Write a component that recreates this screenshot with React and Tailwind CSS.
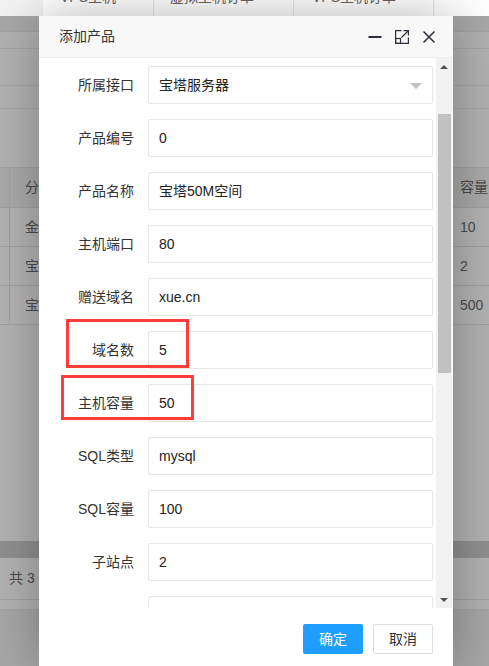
import React from "react";

const rows = [
  { label: "所属接口", value: "宝塔服务器", select: true },
  { label: "产品编号", value: "0" },
  { label: "产品名称", value: "宝塔50M空间" },
  { label: "主机端口", value: "80" },
  { label: "赠送域名", value: "xue.cn" },
  { label: "域名数", value: "5" },
  { label: "主机容量", value: "50" },
  { label: "SQL类型", value: "mysql" },
  { label: "SQL容量", value: "100" },
  { label: "子站点", value: "2" },
  { label: "", value: "" },
];

const tableRows = [
  { a: "金", b: "10" },
  { a: "宝", b: "2" },
  { a: "宝", b: "500" },
];

function TableRow({ a, b, header }) {
  return (
    <div
      className={`grid grid-cols-[10px_434px_1fr] h-[39px] border-t border-[#a0a0a0] ${
        header ? "bg-[#a9a9a9] h-[40px]" : "bg-[#b2b2b2]"
      }`}
    >
      <div className="border-r border-[#a0a0a0]" />
      <div className="flex items-center pl-[15px] text-[14px] text-[#4a4a4a]">{a}</div>
      <div className="flex items-center pl-[15px] text-[14px] text-[#4a4a4a] border-l border-[#a0a0a0]">
        {b}
      </div>
    </div>
  );
}

export default function App() {
  return (
    <div className="relative h-[666px] w-[489px] overflow-hidden bg-[#a6a6a6] font-['Liberation_Sans','Noto_Sans_CJK_SC',sans-serif]">
      {/* top tabs strip */}
      <div className="flex h-4 overflow-hidden bg-white">
        <div className="w-[43px] bg-[#f2f2f2]" />
        <div className="relative w-[111px] overflow-hidden border-r border-[#e6e6e6]">
          <span className="absolute left-[17px] top-[-13px] text-[14px] text-[#666]">VPS主机</span>
        </div>
        <div className="relative w-[140px] overflow-hidden border-r border-[#e6e6e6]">
          <span className="absolute left-[16px] top-[-13px] text-[14px] text-[#666]">虚拟主机订单</span>
        </div>
        <div className="relative w-[140px] overflow-hidden border-r border-[#e6e6e6]">
          <span className="absolute left-[18px] top-[-13px] text-[14px] text-[#666]">VPS主机订单</span>
        </div>
        <div className="flex-1" />
      </div>

      {/* dimmed page behind */}
      <div className="flex flex-col bg-[#b1b1b1]">
        <div className="h-[15px] bg-[#a7a7a7]" />
        <div className="h-[17px] border-t border-[#a2a2a2]" />
        <div className="h-[37px] border-t border-[#a6a6a6]" />
        <div className="h-[23px] border-t border-[#a6a6a6]" />
        <div className="h-[59px] border-t border-[#a6a6a6]" />
        <TableRow a="分" b="容量" header />
        <TableRow {...tableRows[0]} />
        <TableRow {...tableRows[1]} />
        <TableRow {...tableRows[2]} />
        <div className="h-[217px] border-t border-[#a0a0a0]" />
        <div className="h-[17px] bg-[#8f8f8f]" />
        <div className="flex h-[41px] items-center pl-[9px] text-[14px] text-[#4a4a4a]">共 3 条</div>
        <div className="h-[10px] border-t border-[#a0a0a0]" />
        <div className="h-[60px] border-t border-[#a0a0a0] bg-[#a6a6a6]" />
      </div>

      {/* modal */}
      <div className="absolute left-[39px] top-4 flex h-[650px] w-[414px] flex-col rounded-t-[2px] bg-white shadow-[1px_1px_50px_rgba(0,0,0,0.3)]">
        <div className="flex h-[42px] items-center justify-between border-b border-[#eeeeee] bg-[#f8f8f8] pl-5 pr-[17px]">
          <span className="text-[14px] text-[#333]">添加产品</span>
          <div className="flex items-center gap-[13px]">
            <svg width="14" height="14" viewBox="0 0 14 14">
              <rect x="0.5" y="6" width="13" height="2" fill="#2e2d3c" />
            </svg>
            <svg width="14" height="14" viewBox="0 0 14 14" fill="none" stroke="#2e2d3c" strokeWidth="1.2">
              <path d="M6.5 0.6H0.6V13.4H13.4V7.5" />
              <rect x="0.6" y="8.5" width="4.9" height="4.9" />
              <path d="M6.5 7.5L13 1" />
              <path d="M8.5 0.6H13.4V5.5" />
            </svg>
            <svg width="14" height="14" viewBox="0 0 14 14" fill="none" stroke="#2e2d3c" strokeWidth="1.5">
              <path d="M1.5 1.5L12.5 12.5M12.5 1.5L1.5 12.5" />
            </svg>
          </div>
        </div>

        <div className="flex h-[550px] pr-px">
          <div className="flex-1 overflow-hidden pt-2">
            {rows.map((r, i) => (
              <div key={i} className="mb-[15px] flex h-[38px]">
                <div className="flex w-[109px] shrink-0 items-center justify-end pr-[14px] text-[14px] text-[#333]">
                  {r.label}
                </div>
                <div className="relative flex h-[38px] w-[285px] shrink-0 items-center rounded-[2px] border border-[#e6e6e6] pl-[10px] text-[14px] text-[#222]">
                  {r.value}
                  {r.select && (
                    <span className="absolute right-[10px] top-[16px] h-0 w-0 border-x-[6px] border-t-[6px] border-x-transparent border-t-[#c2c2c2]" />
                  )}
                </div>
              </div>
            ))}
          </div>
          <div className="flex w-4 flex-col items-center bg-[#f1f1f1]">
            <div className="flex h-[17px] items-center justify-center">
              <span className="h-0 w-0 border-x-[4px] border-b-[4px] border-x-transparent border-b-[#505050]" />
            </div>
            <div className="mt-[39px] h-[259px] w-[13px] bg-[#c1c1c1]" />
            <div className="flex-1" />
            <div className="flex h-[17px] items-center justify-center">
              <span className="h-0 w-0 border-x-[4px] border-t-[4px] border-x-transparent border-t-[#505050]" />
            </div>
          </div>
        </div>

        <div className="flex justify-end gap-[10px] pr-5 pt-4">
          <button className="h-[30px] w-[60px] rounded-[2px] bg-[#1e9fff] text-[14px] text-white">确定</button>
          <button className="h-[30px] w-[60px] rounded-[2px] border border-[#dedede] bg-white text-[14px] text-[#333]">
            取消
          </button>
        </div>
      </div>

      {/* red annotation boxes */}
      <div className="absolute left-[66px] top-[319px] h-[49px] w-[123px] border-[3px] border-[#ff3b3b]" />
      <div className="absolute left-[61px] top-[375px] h-[45px] w-[133px] border-[3px] border-[#ff3b3b]" />
    </div>
  );
}
